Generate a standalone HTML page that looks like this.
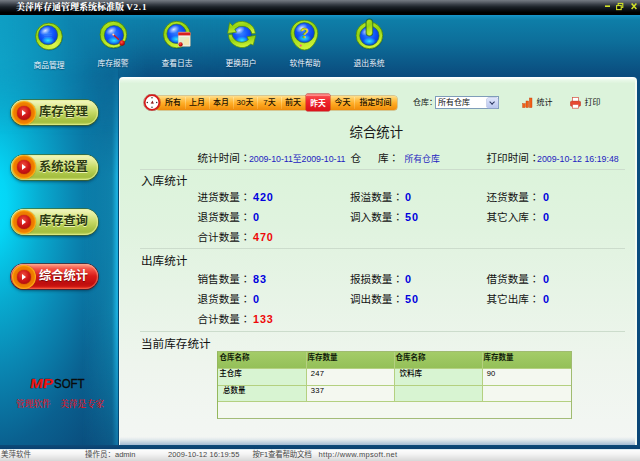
<!DOCTYPE html>
<html lang="zh-CN">
<head>
<meta charset="utf-8">
<title>美萍库存通管理系统标准版 V2.1</title>
<style>
*{margin:0;padding:0;box-sizing:border-box;}
html,body{width:640px;height:461px;overflow:hidden;background:#0a5c8c;}
body{position:relative;font-family:"Liberation Sans","Noto Sans CJK SC",sans-serif;font-size:8px;color:#111;-webkit-font-smoothing:antialiased;}
.abs{position:absolute;}
#bg{position:absolute;left:0;top:0;width:640px;height:461px;
 background:
  linear-gradient(to bottom,#1896cc 15px,#1088b6 17.5px,#0e7ea8 20px,#0d6e9a 42px,#0a4c7e 75px,#0a4c7e 300px,#0a4474 461px);
}
#glow{position:absolute;left:0;top:15px;width:640px;height:434px;
 background:
  radial-gradient(ellipse 170px 340px at -10px 188px,rgba(4,222,252,1) 0%,rgba(5,214,246,1) 10%,rgba(8,178,214,.92) 30%,rgba(10,152,194,.8) 48%,rgba(10,122,168,.5) 72%,rgba(10,100,150,0) 100%);
}
#tglow{position:absolute;left:0;top:15px;width:240px;height:120px;background:linear-gradient(to right,rgba(18,170,204,.6) 0,rgba(16,150,190,.32) 70px,rgba(14,130,176,.12) 150px,rgba(14,130,170,0) 230px);
 -webkit-mask-image:linear-gradient(to bottom,#000 0,#000 35%,transparent 100%);mask-image:linear-gradient(to bottom,#000 0,#000 35%,transparent 100%);}
#streak{position:absolute;left:82px;top:60px;width:37px;height:389px;background:linear-gradient(to right,rgba(20,160,196,0) 0,rgba(20,160,196,.5) 30px,rgba(28,180,226,.9) 34.5px,rgba(28,180,226,.9) 36px,rgba(6,70,110,.9) 36.4px);
 -webkit-mask-image:linear-gradient(to bottom,transparent 0,#000 30%,#000 65%,rgba(0,0,0,.45) 100%);mask-image:linear-gradient(to bottom,transparent 0,#000 30%,#000 65%,rgba(0,0,0,.45) 100%);}
#titlebar{position:absolute;left:0;top:0;width:640px;height:15.4px;
 background:linear-gradient(to bottom,#757b83 0px,#5c626a 2px,#383e46 4.5px,#1c2228 7px,#0b0f13 10px,#000 12.5px,#000 15.4px);}
#title{position:absolute;left:16px;top:1px;height:12px;line-height:12px;font-family:"Liberation Serif","Noto Serif CJK SC",serif;font-weight:900;font-size:9px;color:#fff;white-space:nowrap;letter-spacing:0;}
#panel{position:absolute;left:119px;top:77px;width:518.3px;height:367.5px;border-radius:4px 4px 0 0;
 background:linear-gradient(to bottom,rgba(160,185,210,0) 360px,rgba(160,185,210,.25) 363px,rgba(150,178,206,.8) 367.5px),linear-gradient(to bottom,#ffffff 0px,#fbfefb 1.2px,#e8f8e8 3.2px,#dcf3db 6.5px,#dcf3db 90px,#e0f3df 150px,#e7f4e6 215px,#eef5ed 285px,#f2f6f2 345px,#f3f6f3 367px);
 box-shadow:inset 1px 0 0 #f4fbf4,inset -2px 0 0 #f4fbf4;}
#bottomband{position:absolute;left:0;top:444.5px;width:640px;height:4.5px;background:linear-gradient(to bottom,#0c4a78,#0a4070);}
#status{position:absolute;left:0;top:448.5px;width:640px;height:12.5px;background:linear-gradient(to bottom,#cfe6ee 0,#fbfbfb 1.5px,#f4f4f4 5px,#d6d6d6 12.5px);font-size:7.5px;line-height:12px;color:#484848;white-space:nowrap;}
#status span{position:absolute;top:0;}

/* toolbar */
.tlabel{position:absolute;top:58px;width:64px;text-align:center;font-size:7.8px;line-height:11px;color:#eef6ff;text-shadow:0 1px 1px rgba(0,30,60,.55);white-space:nowrap;}
.ticon{position:absolute;top:16px;width:40px;height:40px;overflow:visible;}
/* sidebar buttons */
.sbtn{position:absolute;left:11.4px;width:87px;height:25.2px;border-radius:13px;
 background:linear-gradient(to bottom,#f4f7c8 0%,#e4ed9c 20%,#c6d964 50%,#aac446 76%,#a4be40 88%,#bcd25a 100%);
 box-shadow:0 0 0 .8px rgba(80,100,16,.8),0 2px 3px rgba(0,30,50,.5),inset 0 0 0 1.2px rgba(226,238,140,.75),inset 0 1px 1px rgba(255,255,230,.9);}
.sbtn.on{background:linear-gradient(to bottom,#ffa48c 0%,#f6584a 18%,#d81a18 48%,#c00e0e 78%,#c81410 88%,#ee3424 100%);
 box-shadow:0 0 0 .8px rgba(110,10,10,.85),0 2px 3px rgba(0,30,50,.5),inset 0 0 0 1.2px rgba(255,120,90,.55),inset 0 1px 1px rgba(255,220,200,.9);}
.sbtn b{position:absolute;left:27.6px;top:0;height:26px;line-height:25.4px;font-size:12.2px;font-weight:700;color:#2c3a12;letter-spacing:.1px;text-shadow:0 1px 0 rgba(245,250,190,.9);white-space:nowrap;}
.sbtn.on b{color:#fff;text-shadow:0 1px 1px rgba(90,0,0,.8);}
.sbtn i{position:absolute;left:.4px;top:.6px;width:24px;height:24px;border-radius:50%;
 background:radial-gradient(circle at 50% 50%,#e86000 0%,#f08000 60%,#ffb818 70%,#ffde38 84%,#f6c21c 100%);box-shadow:0 0 1px rgba(120,60,0,.9);}
.sbtn i:before{content:"";position:absolute;left:5px;top:5px;width:14px;height:14px;border-radius:50%;
 background:radial-gradient(circle at 45% 35%,#f05040 0%,#d01818 45%,#a00808 100%);box-shadow:0 0 1px #700;}
.sbtn i:after{content:"";position:absolute;left:10.2px;top:9px;border-left:4.6px solid #fff;border-top:3px solid transparent;border-bottom:3px solid transparent;}

/* date bar */
#dbar{position:absolute;left:156px;top:96.3px;width:241px;height:13.4px;border-radius:3px;
 background:linear-gradient(to bottom,#ffe08c 0%,#ffc758 22%,#ffae28 50%,#f79a14 78%,#ee8c0c 100%);
 box-shadow:0 0 0 .5px rgba(200,120,20,.7);}
.dt{position:absolute;top:96px;height:14px;line-height:13.5px;font-size:8px;font-weight:500;color:#201000;text-align:center;white-space:nowrap;transform:translateX(-50%);}
.dsep{position:absolute;top:97px;width:1px;height:12px;background:linear-gradient(to bottom,rgba(255,240,190,.55),rgba(255,200,110,.3));}
#dsel{position:absolute;left:305.8px;top:93.7px;width:24.2px;height:17px;border-radius:1.5px;
 background:linear-gradient(to bottom,#f4464a 0%,#ffb0a8 6%,#f8484a 14%,#f02830 40%,#e41a22 75%,#dc141c 100%);box-shadow:0 0 0 .4px #c01820;}
#clock{position:absolute;left:143px;top:94px;width:18px;height:17px;}
.lbl8{position:absolute;font-size:8px;line-height:11px;white-space:nowrap;color:#111;}
#sel{position:absolute;left:435px;top:96px;width:64px;height:13px;background:#fff;border:1px solid #7f9db9;}
#sel span{position:absolute;left:2px;top:.6px;line-height:10.5px;font-size:8px;white-space:nowrap;}
#sel em{position:absolute;right:0.5px;top:0.5px;width:10.5px;height:10px;border-radius:1.5px;background:linear-gradient(to bottom,#dfe6fb,#b9c6ee);box-shadow:0 0 0 .5px #9aa8d8;}
#sel em:after{content:"";position:absolute;left:3px;top:2px;width:3.2px;height:3.2px;border-right:1.3px solid #2a3660;border-bottom:1.3px solid #2a3660;transform:rotate(45deg);}
/* content */
.h13{position:absolute;font-size:13.4px;line-height:16px;white-space:nowrap;color:#1a1a1a;}
.h11{position:absolute;font-size:11.6px;line-height:14px;white-space:nowrap;color:#111;}
.t10{position:absolute;font-size:10.6px;line-height:14px;white-space:nowrap;color:#111;}
.t10 i{font-style:normal;font-family:"Noto Sans CJK TC","Noto Sans CJK SC",sans-serif;}
.v{position:absolute;font-size:10.8px;line-height:14px;font-weight:700;color:#0000de;white-space:nowrap;letter-spacing:.9px;font-family:"Liberation Sans",sans-serif;}
.v.r{color:#ee0808;}
.bl{position:absolute;font-size:8.8px;line-height:12px;color:#1c1cc0;white-space:nowrap;}
.hr{position:absolute;left:140px;width:485px;height:1px;background:#ccdccc;}
/* table */
#tb{position:absolute;left:217px;top:351px;width:355px;height:67.5px;border:1px solid #a0bc70;border-left:1.5px solid #94b85c;border-bottom:1.5px solid #a4bc78;background:#f4f8f0;}
#tb div{position:absolute;}
#tb .hd{left:0;top:0;width:353px;height:16.4px;background:linear-gradient(to bottom,#a4cc68,#94c058);}
#tb .n{background:#d8f4d2;}
#tb .ln{background:#b4d080;}
#tb span{position:absolute;font-size:7.5px;line-height:11px;white-space:nowrap;color:#000;font-weight:500;}
#tb .hd span{font-weight:700;color:#10200a;top:0px;}
#tb .nm{font-size:7.6px;letter-spacing:.2px;font-weight:400;}
/* logo */
#logo{position:absolute;left:29px;top:376px;width:58px;height:15px;}
#slogan,#slogan2{position:absolute;left:16px;top:398px;font-size:8.7px;line-height:12px;color:#f40a14;white-space:pre;font-family:"Liberation Serif","Noto Serif CJK SC",serif;font-weight:500;}
#slogan2{left:60px;font-size:8.8px;}
.wc{position:absolute;top:0;}
</style>
</head>
<body>
<div id="bg"></div>
<div id="glow"></div>
<div id="streak"></div>
<div id="tglow"></div>
<div id="titlebar"></div>
<div id="title">美萍库存通管理系统标准版 <span style="letter-spacing:.8px">V2.1</span></div>
<svg width="0" height="0" style="position:absolute">
<defs>
 <linearGradient id="gRing" x1="0" y1="0" x2="0.3" y2="1">
  <stop offset="0" stop-color="#bcec28"/><stop offset=".45" stop-color="#94d410"/><stop offset="1" stop-color="#ccf238"/>
 </linearGradient>
 <radialGradient id="gBall" cx=".45" cy=".4" r=".62">
  <stop offset="0" stop-color="#3a84ff"/><stop offset=".55" stop-color="#1054fa"/><stop offset="1" stop-color="#0836cc"/>
 </radialGradient>
 <radialGradient id="gCyan" cx=".5" cy=".5" r=".5">
  <stop offset="0" stop-color="#30f0ff" stop-opacity=".95"/><stop offset=".6" stop-color="#18c8ff" stop-opacity=".55"/><stop offset="1" stop-color="#18a0ff" stop-opacity="0"/>
 </radialGradient>
 <radialGradient id="gHi" cx=".5" cy=".5" r=".5">
  <stop offset="0" stop-color="#fff" stop-opacity=".85"/><stop offset="1" stop-color="#cfe0ff" stop-opacity="0"/>
 </radialGradient>
 <radialGradient id="gRed" cx=".4" cy=".35" r=".65">
  <stop offset="0" stop-color="#ff5a48"/><stop offset=".6" stop-color="#d81414"/><stop offset="1" stop-color="#900808"/>
 </radialGradient>
 <radialGradient id="gRingHi" cx=".68" cy=".78" r=".5">
  <stop offset="0" stop-color="#e8fa60" stop-opacity=".85"/><stop offset=".6" stop-color="#d0f040" stop-opacity=".3"/><stop offset="1" stop-color="#c0e830" stop-opacity="0"/>
 </radialGradient>
 <g id="ball">
  <circle cx="0" cy="0" r="9.7" fill="url(#gBall)" stroke="#2a6a30" stroke-width=".6"/>
  <ellipse cx="0" cy="5.4" rx="6.8" ry="4" fill="url(#gCyan)"/>
  <ellipse cx="-2.8" cy="-4.4" rx="6" ry="3.8" fill="url(#gHi)" transform="rotate(-28 -2.8 -4.4)"/>
 </g>
</defs>
</svg>

<svg class="ticon" style="left:28px" viewBox="0 0 40 40">
 <circle cx="21.2" cy="21" r="13.6" fill="rgba(0,30,60,.35)"/>
 <circle cx="20.9" cy="20.4" r="13.3" fill="url(#gRing)" stroke="#4c8a0a" stroke-width=".8"/>
 <circle cx="20.9" cy="20.4" r="12.8" fill="url(#gRingHi)"/>
 <use href="#ball" x="20" y="19.1"/>
 <g stroke="#5aa0ff" stroke-width=".5" opacity=".4"><path d="M16 17.5h8M16 19.5h8M16 21.5h8"/></g>
</svg>
<svg class="ticon" style="left:93px" viewBox="0 0 40 40">
 <circle cx="20.6" cy="19.2" r="13.6" fill="rgba(0,30,60,.35)"/>
 <circle cx="20.4" cy="18.6" r="13.3" fill="url(#gRing)" stroke="#4c8a0a" stroke-width=".8"/>
 <use href="#ball" x="21" y="19.2"/>
 <path d="M20.2 18.5L25.4 23.2" stroke="#d01818" stroke-width="1.5" stroke-linecap="round"/>
 <circle cx="20.3" cy="18.6" r="1" fill="#ffd8c8"/>
 <circle cx="29.1" cy="27" r="2.7" fill="url(#gRed)"/>
</svg>
<svg class="ticon" style="left:157px" viewBox="0 0 40 40">
 <circle cx="20" cy="19.2" r="13.6" fill="rgba(0,30,60,.35)"/>
 <circle cx="19.8" cy="18.6" r="13.3" fill="url(#gRing)" stroke="#4c8a0a" stroke-width=".8"/>
 <use href="#ball" x="19.6" y="17.8"/>
 <rect x="21.6" y="16.4" width="12.2" height="14.6" rx="1.2" fill="rgba(0,20,40,.35)"/>
 <rect x="21.2" y="16" width="12.2" height="14.6" rx="1.2" fill="#f2f4e4" stroke="#b8b8a0" stroke-width=".4"/>
 <rect x="21.2" y="16.4" width="12.2" height="3" fill="#d82020"/>
 <rect x="22.4" y="21" width="9.8" height="8.4" fill="#e4ecc8"/>
 <path d="M27 24l5 -2v7h-5z" fill="#f4e8b0"/>
 <circle cx="23.6" cy="28.4" r="2.1" fill="url(#gRed)"/>
</svg>
<svg class="ticon" style="left:221px" viewBox="0 0 40 40">
 <use href="#ball" x="21" y="18.8"/>
 <g fill="url(#gRing)" stroke="#4c8a0a" stroke-width=".7" stroke-linejoin="round">
  <path d="M34.4 17.6A13.4 13.4 0 0 0 11.4 9.6L8.6 6.6L6.6 17.4L15.4 16.2L13.8 13.2A10.2 10.2 0 0 1 31 17.8Z"/>
  <path d="M7.4 18.8A13.4 13.4 0 0 0 29.8 28L32.2 29.2L34.8 19.4L26 20.8L27.4 23.8A10.2 10.2 0 0 1 10.8 18.6Z"/>
 </g>
</svg>
<svg class="ticon" style="left:285px" viewBox="0 0 40 40">
 <path d="M19.4 4.2C27 4.2 32.8 10 32.8 17.2C32.8 24 26.8 34 19.6 34C12.4 34 5.8 24.6 5.8 17.4C5.8 10 11.8 4.2 19.4 4.2Z" fill="url(#gRing)" stroke="#4c8a0a" stroke-width=".8"/>
 <use href="#ball" x="19.4" y="16.7" transform="translate(19.4 16.7) scale(1.04) translate(-19.4 -16.7)"/>
 <text x="19.6" y="21.6" text-anchor="middle" font-family="Liberation Sans,sans-serif" font-weight="700" font-size="14" fill="#e8e020" stroke="#7a8a00" stroke-width=".3">?</text>
 <circle cx="15.7" cy="29.6" r="1.1" fill="#ff5a7a"/>
</svg>
<svg class="ticon" style="left:349px" viewBox="0 0 40 40">
 <circle cx="20.6" cy="20" r="13.6" fill="rgba(0,30,60,.35)"/>
 <circle cx="20.4" cy="19.4" r="13.3" fill="url(#gRing)" stroke="#4c8a0a" stroke-width=".8"/>
 <use href="#ball" x="20.4" y="19.8"/>
 <rect x="16.6" y="2.6" width="7.6" height="18" rx="3.8" fill="#0a4a50" opacity=".8"/>
 <rect x="17.4" y="3.4" width="6" height="16.4" rx="3" fill="url(#gRing)" stroke="#4c8a0a" stroke-width=".5"/>
</svg>
<div class="tlabel" style="left:17px;top:59.5px">商品管理</div>
<div class="tlabel" style="left:81px">库存报警</div>
<div class="tlabel" style="left:145px">查看日志</div>
<div class="tlabel" style="left:209px">更换用户</div>
<div class="tlabel" style="left:273px">软件帮助</div>
<div class="tlabel" style="left:337px">退出系统</div>

<div class="sbtn" style="top:100px"><i></i><b>库存管理</b></div>
<div class="sbtn" style="top:154.7px"><i></i><b>系统设置</b></div>
<div class="sbtn" style="top:209.4px"><i></i><b>库存查询</b></div>
<div class="sbtn on" style="top:264.1px"><i></i><b>综合统计</b></div>
<div id="panel"></div>

<div id="dbar"></div>
<div id="dsel"></div>
<div class="dsep" style="left:185px"></div><div class="dsep" style="left:209px"></div><div class="dsep" style="left:233px"></div><div class="dsep" style="left:257px"></div><div class="dsep" style="left:281px"></div><div class="dsep" style="left:354px"></div>
<svg id="clock" viewBox="0 0 18 17">
 <circle cx="9" cy="8.5" r="7.3" fill="#fff" stroke="#d81818" stroke-width="1.7"/>
 <circle cx="9" cy="8.5" r="8.5" fill="none" stroke="#901010" stroke-width=".4"/>
 <g fill="#222"><circle cx="9" cy="3.8" r=".7"/><circle cx="9" cy="13.2" r=".7"/><circle cx="4.3" cy="8.5" r=".7"/><circle cx="13.7" cy="8.5" r=".7"/></g>
 <path d="M9.6 6.6L10.8 9.8L7.6 9.4Z" fill="#901818"/>
</svg>
<div class="dt" style="left:173px">所有</div>
<div class="dt" style="left:197px">上月</div>
<div class="dt" style="left:221px">本月</div>
<div class="dt" style="left:245px">30天</div>
<div class="dt" style="left:269.5px">7天</div>
<div class="dt" style="left:293px">前天</div>
<div class="dt" style="left:318px;top:96.9px;color:#fff;font-weight:700;font-size:7.8px">昨天</div>
<div class="dt" style="left:342.5px">今天</div>
<div class="dt" style="left:375.5px">指定时间</div>

<div class="lbl8" style="left:413px;top:97px">仓库：</div>
<div id="sel"><span>所有仓库</span><em></em></div>
<svg class="abs" style="left:522px;top:97px" width="11" height="11" viewBox="0 0 11 11">
 <rect x=".6" y="6.6" width="2.6" height="4" fill="#f06018" stroke="#c03808" stroke-width=".4"/>
 <rect x="4" y="4" width="2.6" height="6.6" fill="#f06018" stroke="#c03808" stroke-width=".4"/>
 <rect x="7.4" y="1" width="2.6" height="9.6" fill="#f06018" stroke="#c03808" stroke-width=".4"/>
</svg>
<div class="lbl8" style="left:536.5px;top:97px">统计</div>
<svg class="abs" style="left:569.5px;top:97px" width="11" height="12" viewBox="0 0 11 12">
 <rect x="2.6" y=".6" width="5.8" height="4" fill="#fff" stroke="#d85040" stroke-width=".7"/>
 <rect x=".5" y="4.2" width="10" height="5" rx="1" fill="#e84830" stroke="#b82818" stroke-width=".5"/>
 <rect x="2.4" y="7.4" width="6.2" height="3.8" fill="#fff" stroke="#d85040" stroke-width=".7"/>
</svg>
<div class="lbl8" style="left:584.5px;top:97px">打印</div>

<div class="h13" style="left:349.5px;top:125px">综合统计</div>

<div class="t10" style="left:197.5px;top:151px">统计时间<i lang="zh-TW">：</i></div>
<div class="bl" style="left:249px;top:152.5px;letter-spacing:-.05px">2009-10-11至2009-10-11</div>
<div class="t10" style="left:350.4px;top:151px">仓</div><div class="t10" style="left:378px;top:151px">库<i lang="zh-TW">：</i></div>
<div class="bl" style="left:404.5px;top:152.5px">所有仓库</div>
<div class="t10" style="left:486.5px;top:151px">打印时间<i lang="zh-TW">：</i></div>
<div class="bl" style="left:537px;top:152.5px">2009-10-12 16:19:48</div>
<div class="hr" style="top:168.5px"></div>

<div class="h11" style="left:141px;top:174px">入库统计</div>
<div class="t10" style="left:197.5px;top:190px">进货数量<i lang="zh-TW">：</i></div><div class="v" style="left:253px;top:190px">420</div>
<div class="t10" style="left:350px;top:190px">报溢数量<i lang="zh-TW">：</i></div><div class="v" style="left:405px;top:190px">0</div>
<div class="t10" style="left:486.5px;top:190px">还货数量<i lang="zh-TW">：</i></div><div class="v" style="left:543px;top:190px">0</div>
<div class="t10" style="left:197.5px;top:210px">退货数量<i lang="zh-TW">：</i></div><div class="v" style="left:253px;top:210px">0</div>
<div class="t10" style="left:350px;top:210px">调入数量<i lang="zh-TW">：</i></div><div class="v" style="left:405px;top:210px">50</div>
<div class="t10" style="left:486.5px;top:210px">其它入库<i lang="zh-TW">：</i></div><div class="v" style="left:543px;top:210px">0</div>
<div class="t10" style="left:197.5px;top:230px">合计数量<i lang="zh-TW">：</i></div><div class="v r" style="left:253px;top:230px">470</div>
<div class="hr" style="top:248px"></div>

<div class="h11" style="left:141px;top:254px">出库统计</div>
<div class="t10" style="left:197.5px;top:272px">销售数量<i lang="zh-TW">：</i></div><div class="v" style="left:253px;top:272px">83</div>
<div class="t10" style="left:350px;top:272px">报损数量<i lang="zh-TW">：</i></div><div class="v" style="left:405px;top:272px">0</div>
<div class="t10" style="left:486.5px;top:272px">借货数量<i lang="zh-TW">：</i></div><div class="v" style="left:543px;top:272px">0</div>
<div class="t10" style="left:197.5px;top:292px">退货数量<i lang="zh-TW">：</i></div><div class="v" style="left:253px;top:292px">0</div>
<div class="t10" style="left:350px;top:292px">调出数量<i lang="zh-TW">：</i></div><div class="v" style="left:405px;top:292px">50</div>
<div class="t10" style="left:486.5px;top:292px">其它出库<i lang="zh-TW">：</i></div><div class="v" style="left:543px;top:292px">0</div>
<div class="t10" style="left:197.5px;top:312px">合计数量<i lang="zh-TW">：</i></div><div class="v r" style="left:253px;top:312px">133</div>
<div class="hr" style="top:331px"></div>

<div class="h11" style="left:141px;top:336.8px">当前库存统计</div>
<div id="tb">
 <div class="hd"><span style="left:1.6px">仓库名称</span><span style="left:89.6px">库存数量</span><span style="left:177.5px">仓库名称</span><span style="left:265.6px">库存数量</span></div>
 <div class="n" style="left:0;top:16.2px;width:88.4px;height:33.4px"></div>
 <div class="n" style="left:176.4px;top:16.2px;width:88px;height:33.4px"></div>
 <div class="ln" style="left:0;top:16px;width:353px;height:1px"></div>
 <div class="ln" style="left:0;top:32.6px;width:353px;height:1px"></div>
 <div class="ln" style="left:0;top:49.2px;width:353px;height:1px"></div>
 <div class="ln" style="left:88px;top:0;width:1px;height:49.6px"></div>
 <div class="ln" style="left:176px;top:0;width:1px;height:49.6px"></div>
 <div class="ln" style="left:264px;top:0;width:1px;height:49.6px"></div>
 <span style="left:1.2px;top:16.4px">主仓库</span><span class="nm" style="left:92.8px;top:16.4px">247</span>
 <span style="left:181.5px;top:16.4px">饮料库</span><span class="nm" style="left:268.7px;top:16.4px">90</span>
 <span style="left:5.1px;top:32.9px">总数量</span><span class="nm" style="left:92.8px;top:32.9px">337</span>
</div>

<svg id="logo" viewBox="0 0 58 15">
 <text x="1.6" y="12.2" font-family="Liberation Sans,sans-serif" font-weight="700" font-size="13.2" transform="skewX(-9) translate(1.1 0)" fill="#f01410" stroke="#3a0808" stroke-width=".5" paint-order="stroke" textLength="23" lengthAdjust="spacingAndGlyphs">MP</text>
 <text x="25" y="12.2" font-family="Liberation Sans,sans-serif" font-weight="400" font-size="13.4" fill="#0a0a0a" stroke="#0a0a0a" stroke-width=".35" textLength="30.6" lengthAdjust="spacingAndGlyphs">SOFT</text>
</svg>
<div id="slogan">管理软件</div><div id="slogan2">美萍是专家</div>

<svg class="wc" style="left:600px" width="40" height="15" viewBox="0 0 40 15">
 <rect x="5" y="5.4" width="5" height="1.6" fill="#d4e428"/>
 <rect x="18.2" y="3.4" width="4.6" height="4" fill="none" stroke="#d4e428" stroke-width="1.1"/>
 <rect x="16.6" y="5.6" width="4.6" height="4" fill="#101010" stroke="#d4e428" stroke-width="1.1"/>
 <path d="M31.6 3.6l4.8 5.4M36.4 3.6l-4.8 5.4" stroke="#d4e428" stroke-width="1.5"/>
</svg>
<div id="bottomband"></div>
<div id="status">
 <span style="left:1px">美萍软件</span>
 <span style="left:85px">操作员：admin</span>
 <span style="left:168px;letter-spacing:.1px">2009-10-12 16:19:55</span>
 <span style="left:252.5px;letter-spacing:-.25px">按F1查看帮助文档</span>
 <span style="left:318.5px;letter-spacing:.34px">http://www.mpsoft.net</span>
</div>
</body>
</html>
